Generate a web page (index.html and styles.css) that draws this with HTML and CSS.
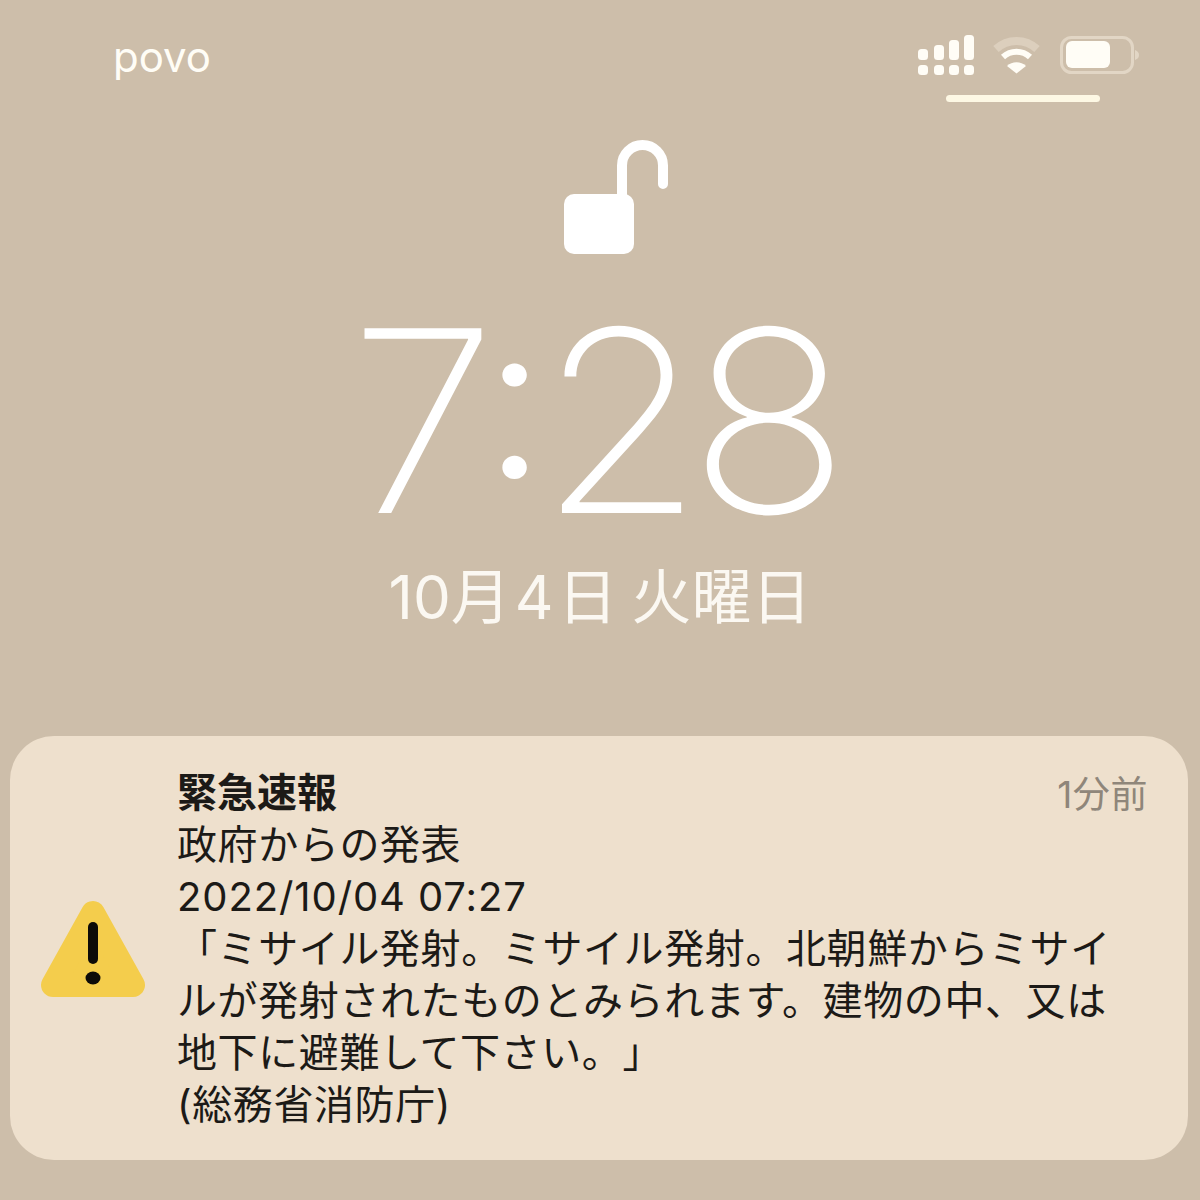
FILE: index.html
```html
<!DOCTYPE html>
<html lang="ja">
<head>
    <meta charset="UTF-8">
    <meta name="viewport" content="width=device-width, initial-scale=1.0">
    <title>緊急速報</title>
    <link rel="stylesheet" href="styles.css">
</head>
<body>
    <div class="status-bar">
        <span class="carrier">povo</span>
        <div class="status-icons">
            <svg class="signal" width="56" height="40" viewBox="0 0 56 40">
                <rect x="0" y="14" width="10" height="11" rx="3.500"/>
                <rect x="16" y="10" width="10" height="15" rx="3.500"/>
                <rect x="31" y="5" width="10" height="20" rx="3.500"/>
                <rect x="46" y="0" width="10" height="25" rx="3.500"/>
                <rect x="0" y="30" width="10" height="10" rx="3.500"/>
                <rect x="16" y="30" width="10" height="10" rx="3.500"/>
                <rect x="31" y="30" width="10" height="10" rx="3.500"/>
                <rect x="46" y="30" width="10" height="10" rx="3.500"/>
            </svg>
            <svg class="wifi" width="48" height="38" viewBox="0 0 48 38">
                <path d="M3 13 A30 30 0 0 1 44 13" class="wifi-faint"/>
                <path d="M10 21 A20 20 0 0 1 37 21" class="wifi-mid"/>
                <path d="M14 30 A14 14 0 0 1 33 30 L23.500 37.500 Z" class="wifi-dot"/>
            </svg>
            <svg class="battery" width="80" height="38" viewBox="0 0 80 38">
                <rect x="1.500" y="1.500" width="71" height="35" rx="10" class="battery-case"/>
                <rect x="6" y="5" width="44" height="27" rx="6" class="battery-level"/>
                <path d="M75 14 C78 15 79 17 79 19 C79 21 78 23 75 24 Z" class="battery-case-tip"/>
            </svg>
        </div>
    </div>
    <div class="indicator-row">
        <div class="indicator"></div>
    </div>

    <div class="lock-row">
        <svg width="106" height="116" viewBox="0 0 106 116">
            <rect x="0" y="54" width="70" height="60" rx="10" fill="#fff"/>
            <path d="M58 60 V25.500 A20.500 20.500 0 0 1 99 25.500 V44" fill="none" stroke="#fff" stroke-width="10" stroke-linecap="round"/>
        </svg>
    </div>

    <div class="time">7<span class="time-colon">:</span>28</div>
    <div class="date">10月<span class="date-num">4</span>日 火曜日</div>

    <div class="card">
        <svg class="warning" width="106" height="98" viewBox="0 0 106 98">
            <path d="M53 13 L93 85 H13 Z" fill="#f4cd4c" stroke="#f4cd4c" stroke-width="24" stroke-linejoin="round"/>
            <rect x="48" y="22" width="10" height="42" rx="5" fill="#0d0b08"/>
            <ellipse cx="53" cy="78" rx="7.500" ry="6.500" fill="#0d0b08"/>
        </svg>
        <div class="card-body">
            <div class="card-head">
                <span class="card-title">緊急速報</span>
                <span class="card-age">1分前</span>
            </div>
            <div>政府からの発表</div>
            <div class="card-stamp">2022/10/04 07:27</div>
            <div>「ミサイル発射。ミサイル発射。北朝鮮からミサイ</div>
            <div>ルが発射されたものとみられます。建物の中、又は</div>
            <div>地下に避難して下さい。」</div>
            <div>(総務省消防庁)</div>
        </div>
    </div>
</body>
</html>
```

FILE: styles.css
```css
body {
    font-family: "Inter", "Noto Sans CJK JP", sans-serif;
    background-color: #cdbeaa;
    margin: 0;
    height: 1200px;
    overflow: hidden;
}

.status-bar {
    display: flex;
    justify-content: space-between;
    align-items: center;
    padding: 33px 60px 0 113px;
    height: 43px;
}

.carrier {
    color: #fffdf6;
    font-size: 42px;
    padding-top: 4px;
}

.status-icons {
    display: flex;
    align-items: center;
    gap: 19px;
}

.signal rect {
    fill: #fffdf6;
}

.wifi path {
    fill: none;
}

.wifi .wifi-faint {
    stroke: #dccfbd;
    stroke-width: 8;
}

.wifi .wifi-mid {
    stroke: #fffdf6;
    stroke-width: 6;
}

.wifi .wifi-dot {
    fill: #fffdf6;
}

.battery-case {
    fill: none;
    stroke: #e2d6c5;
    stroke-width: 3;
}

.battery-level {
    fill: #fffdf6;
}

.battery-case-tip {
    fill: #e2d6c5;
}

.indicator-row {
    display: flex;
    justify-content: flex-end;
    padding: 19px 100px 0 0;
}

.indicator {
    width: 154px;
    height: 7px;
    border-radius: 4px;
    background-color: #fdf8e4;
}

.lock-row {
    display: flex;
    justify-content: center;
    padding: 38px 0 0 34px;
}

.time {
    color: #fff;
    font-size: 254px;
    font-weight: 220;
    line-height: 250px;
    letter-spacing: -14px;
    text-align: center;
    transform: scaleX(1.05);
    margin-top: 40px;
    padding-right: 15px;
}

.time-colon {
    font-size: 220px;
    font-weight: 300;
    line-height: 0;
    vertical-align: 35px;
    padding: 0 6px 0 0;
}

.date {
    color: #fbf8f2;
    font-size: 60px;
    font-weight: 400;
    line-height: 70px;
    word-spacing: -3px;
    text-align: center;
    margin-top: 16px;
}

.date-num {
    padding: 0 4px;
}

.card {
    margin: 104px 12px 0 10px;
    height: 424px;
    box-sizing: border-box;
    display: flex;
    align-items: center;
    background-color: #eee0cd;
    border-radius: 44px;
    padding: 33px 40px 31px 30px;
    gap: 31px;
    color: #1c1a17;
    font-size: 40px;
    letter-spacing: 0.600px;
    line-height: 52px;
    text-spacing-trim: space-all;
}

.warning {
    flex-shrink: 0;
    margin-top: 0;
}

.card-body {
    flex: 1;
}

.card-head {
    display: flex;
    justify-content: space-between;
}

.card-title {
    font-weight: 700;
    letter-spacing: 0;
}

.card-age {
    color: #8f867a;
    font-size: 37px;
    line-height: 48px;
    padding-top: 4px;
}

.card-stamp {
    letter-spacing: 0.900px;
}
```
